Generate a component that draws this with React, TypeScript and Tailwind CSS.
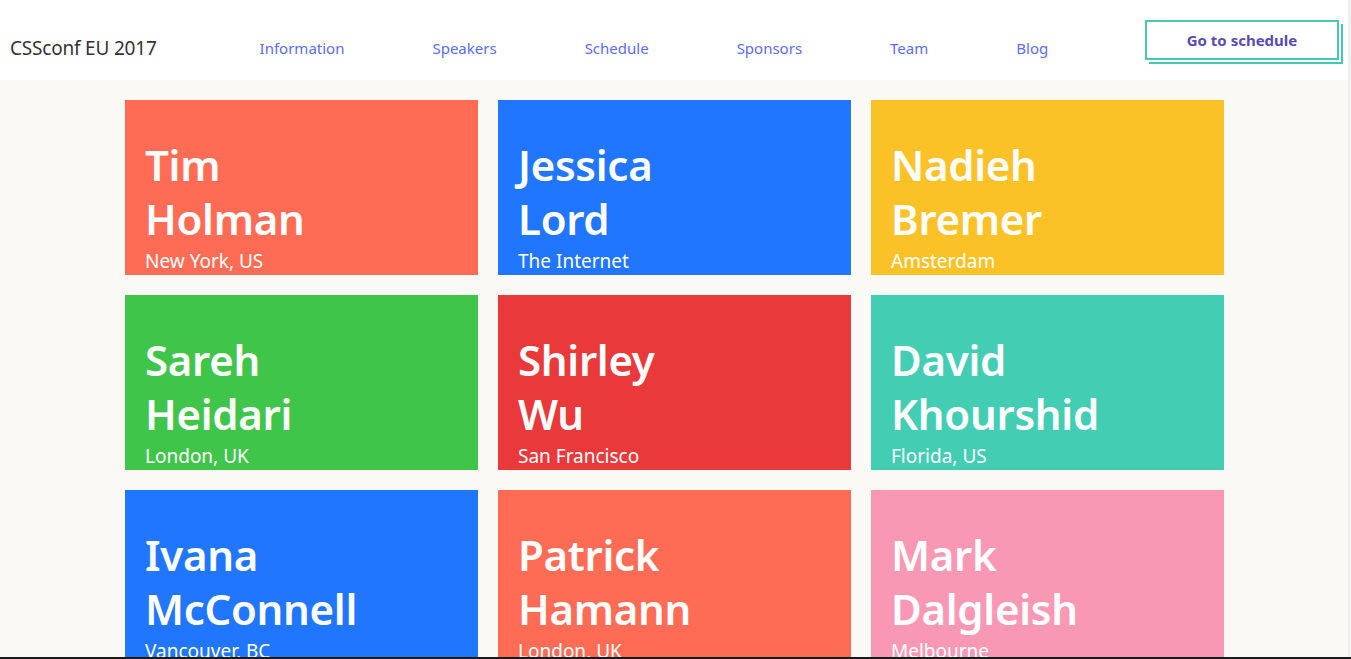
type Speaker = {
  first: string
  last: string
  place: string
  color: string
}

const speakers: Speaker[] = [
  { first: "Tim", last: "Holman", place: "New York, US", color: "bg-[#ff6c56]" },
  { first: "Jessica", last: "Lord", place: "The Internet", color: "bg-[#2176ff]" },
  { first: "Nadieh", last: "Bremer", place: "Amsterdam", color: "bg-[#fbc227]" },
  { first: "Sareh", last: "Heidari", place: "London, UK", color: "bg-[#3fc64a]" },
  { first: "Shirley", last: "Wu", place: "San Francisco", color: "bg-[#ea393b]" },
  { first: "David", last: "Khourshid", place: "Florida, US", color: "bg-[#43cdb3]" },
  { first: "Ivana", last: "McConnell", place: "Vancouver, BC", color: "bg-[#2176ff]" },
  { first: "Patrick", last: "Hamann", place: "London, UK", color: "bg-[#ff6c56]" },
  { first: "Mark", last: "Dalgleish", place: "Melbourne", color: "bg-[#f898b4]" },
]

const links = ["Information", "Speakers", "Schedule", "Sponsors", "Team", "Blog"]

export default function App() {
  return (
    <div className="h-[659px] w-[1351px] overflow-hidden flex flex-col font-['Noto_Sans',sans-serif]">
      <div className="flex flex-1 min-h-0">
        <div className="flex-1 flex flex-col bg-[#faf9f5]">
          {/* Header */}
          <header className="h-20 bg-white flex items-center shrink-0">
            <span className="ml-[10px] mt-[16px] text-[19px] text-[#333] tracking-[-0.2px]">CSSconf EU 2017</span>
            <nav className="ml-[103px] mt-[16px] flex gap-[88px]">
              {links.map((l) => (
                <a key={l} className="text-[15px] text-[#5b6cf6]">
                  {l}
                </a>
              ))}
            </nav>
            <div className="ml-auto mr-[9px] mb-[1px]">
              <button className="w-[194px] h-10 border-2 border-[#46c9b0] bg-white text-[15px] font-bold text-[#5a4bb4] pt-[1px] shadow-[2px_2px_0_0_#fff,4px_4px_0_0_#46c9b0]">
                Go to schedule
              </button>
            </div>
          </header>

          {/* Speakers */}
          <main className="pt-5 pl-[125px]">
            <div className="grid grid-cols-[353px_353px_353px] gap-5">
              {speakers.map((s) => (
                <div
                  key={s.first + s.last}
                  className={`${s.color} h-[175px] overflow-hidden pt-[38px] px-5 text-white`}
                >
                  <h2 className="text-[42px] font-semibold leading-[54px] tracking-[-0.3px]">
                    {s.first}
                    <br />
                    {s.last}
                  </h2>
                  <p className="text-[19px] leading-6 mt-[3px]">{s.place}</p>
                </div>
              ))}
            </div>
          </main>
        </div>
        <div className="w-[3px] bg-[#f0f0f0]" />
      </div>
      <div className="h-[2px] bg-[#1a1a1a] shrink-0" />
    </div>
  )
}
